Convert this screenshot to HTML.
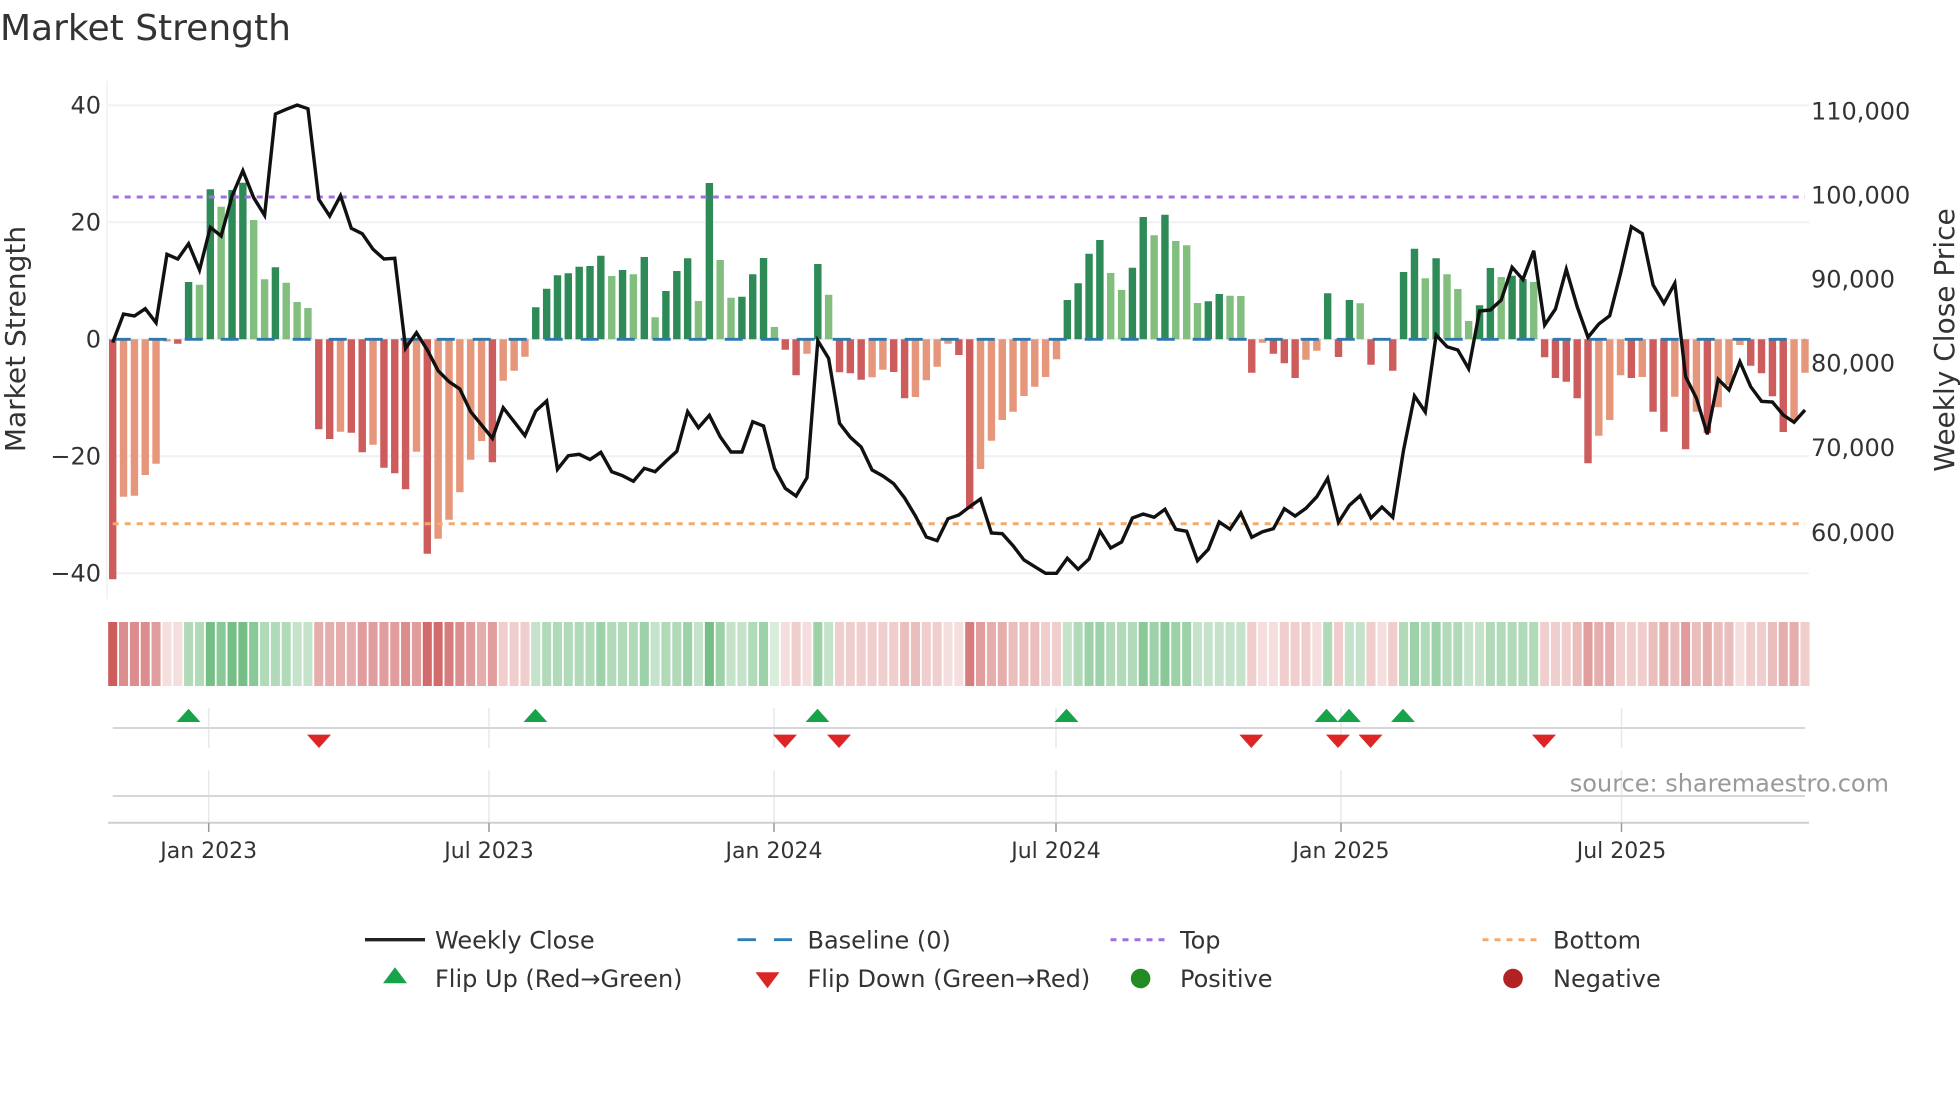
<!DOCTYPE html>
<html><head><meta charset="utf-8"><title>Market Strength</title>
<style>
html,body{margin:0;padding:0;background:#fff;width:1960px;height:1102px;overflow:hidden}
svg{display:block}
text{font-family:"DejaVu Sans","Liberation Sans",sans-serif;fill:#333}
</style></head><body>
<svg width="1960" height="1102" viewBox="0 0 1960 1102" xmlns="http://www.w3.org/2000/svg">
<text x="0" y="40" font-size="36">Market Strength</text>
<path d="M107 81V599" stroke="#f0f0f4" stroke-width="1.5" fill="none"/>
<path d="M108 105.3H1809M108 222.3H1809M108 339.3H1809M108 456.3H1809M108 573.3H1809" stroke="#f0f0f5" stroke-width="2" fill="none"/>
<g transform="matrix(1.00129 0 0 1 -0.846 0)" fill="none">
<g stroke-width="7.4">
<path stroke="#2e8b57" d="M189.2 339.3V282M210.9 339.3V189.3M232.6 339.3V190M243.4 339.3V182.7M275.9 339.3V267.3M535.9 339.3V307.3M546.8 339.3V288.7M557.6 339.3V275.3M568.4 339.3V273.3M579.3 339.3V266.7M590.1 339.3V266M600.9 339.3V255.7M622.6 339.3V270M644.3 339.3V257M665.9 339.3V291M676.8 339.3V271M687.6 339.3V258.3M709.3 339.3V183M741.8 339.3V296.7M752.6 339.3V274.3M763.4 339.3V258M817.6 339.3V264M1066.8 339.3V300M1077.6 339.3V283.3M1088.5 339.3V253.7M1099.3 339.3V240M1131.8 339.3V267.7M1142.6 339.3V217M1164.3 339.3V214.7M1207.6 339.3V301.3M1218.5 339.3V294M1326.8 339.3V293.3M1348.5 339.3V300M1402.6 339.3V272M1413.5 339.3V248.7M1435.1 339.3V258.3M1478.5 339.3V305.3M1489.3 339.3V268M1511 339.3V275.7M1521.8 339.3V279"/>
<path stroke="#82bf7f" d="M200.1 339.3V284.7M221.7 339.3V206.7M254.2 339.3V220M265.1 339.3V279.3M286.7 339.3V282.7M297.6 339.3V302M308.4 339.3V308M611.8 339.3V276M633.4 339.3V274.3M655.1 339.3V317.3M698.4 339.3V301M720.1 339.3V260M730.9 339.3V297.7M774.3 339.3V327M828.4 339.3V294.7M1110.1 339.3V273M1121 339.3V290M1153.5 339.3V235.3M1175.1 339.3V241M1186 339.3V245.3M1196.8 339.3V303M1229.3 339.3V295.7M1240.1 339.3V296M1359.3 339.3V303.3M1424.3 339.3V278.3M1446 339.3V274.3M1456.8 339.3V289M1467.6 339.3V321M1500.1 339.3V277M1532.6 339.3V282"/>
<path stroke="#cd5c5c" d="M113.4 339.3V579.3M178.4 339.3V343.7M319.2 339.3V429.3M330.1 339.3V439M351.7 339.3V432.7M362.6 339.3V452.3M384.3 339.3V467.7M395.1 339.3V473.3M405.9 339.3V489.3M427.6 339.3V553.7M492.6 339.3V462.3M785.1 339.3V349.7M795.9 339.3V375.3M839.3 339.3V372.3M850.1 339.3V373.3M860.9 339.3V379.7M893.4 339.3V372M904.3 339.3V398.3M958.5 339.3V355M969.3 339.3V509M1251 339.3V372.7M1272.6 339.3V353.7M1283.5 339.3V363.3M1294.3 339.3V378M1337.6 339.3V357M1370.1 339.3V364.7M1391.8 339.3V370.7M1543.5 339.3V357.3M1554.3 339.3V378M1565.1 339.3V381.7M1576 339.3V398.3M1586.8 339.3V463.3M1630.1 339.3V378M1651.8 339.3V411.7M1662.6 339.3V431.7M1684.3 339.3V449.3M1706 339.3V433M1749.3 339.3V365.7M1760.1 339.3V373.3M1771 339.3V396.3M1781.8 339.3V432"/>
<path stroke="#e6967a" d="M124.2 339.3V496.7M135.1 339.3V495.7M145.9 339.3V475M156.7 339.3V463.7M167.6 339.3V341.5M340.9 339.3V431.7M373.4 339.3V444.7M416.8 339.3V451.7M438.4 339.3V538.7M449.3 339.3V519.7M460.1 339.3V492.3M470.9 339.3V459.7M481.8 339.3V441M503.4 339.3V380.7M514.3 339.3V370.7M525.1 339.3V356.7M806.8 339.3V353.7M871.8 339.3V377.3M882.6 339.3V369.7M915.1 339.3V397M926 339.3V380.3M936.8 339.3V366.7M947.6 339.3V343.7M980.1 339.3V469M991 339.3V440.7M1001.8 339.3V420M1012.6 339.3V411.7M1023.5 339.3V396M1034.3 339.3V386.7M1045.1 339.3V377M1056 339.3V359.3M1261.8 339.3V342.7M1305.1 339.3V359.7M1316 339.3V350.7M1597.6 339.3V435.7M1608.5 339.3V420M1619.3 339.3V375.3M1641 339.3V377M1673.5 339.3V396.7M1695.1 339.3V411.7M1716.8 339.3V407.3M1727.6 339.3V385M1738.5 339.3V345M1792.6 339.3V420M1803.5 339.3V372.7"/>
</g>
<g stroke-width="9.05">
<g stroke="#cd5c5c">
<path d="M113.4 622V686"/>
<path stroke-opacity=".9" d="M427.6 622V686M438.4 622V686"/>
<path stroke-opacity=".8" d="M449.3 622V686M969.3 622V686"/>
<path stroke-opacity=".7" d="M124.2 622V686M135.1 622V686M145.9 622V686M405.9 622V686M460.1 622V686"/>
<path stroke-opacity=".6" d="M156.7 622V686M362.6 622V686M373.4 622V686M384.3 622V686M395.1 622V686M416.8 622V686M470.9 622V686M492.6 622V686M980.1 622V686M1586.8 622V686M1684.3 622V686"/>
<path stroke-opacity=".5" d="M319.2 622V686M330.1 622V686M340.9 622V686M351.7 622V686M481.8 622V686M991 622V686M1001.8 622V686M1597.6 622V686M1608.5 622V686M1662.6 622V686M1706 622V686M1781.8 622V686M1792.6 622V686"/>
<path stroke-opacity=".4" d="M904.3 622V686M915.1 622V686M1012.6 622V686M1023.5 622V686M1034.3 622V686M1576 622V686M1651.8 622V686M1673.5 622V686M1695.1 622V686M1716.8 622V686M1727.6 622V686M1771 622V686"/>
<path stroke-opacity=".3" d="M503.4 622V686M514.3 622V686M525.1 622V686M795.9 622V686M839.3 622V686M850.1 622V686M860.9 622V686M871.8 622V686M882.6 622V686M893.4 622V686M926 622V686M936.8 622V686M1045.1 622V686M1056 622V686M1251 622V686M1283.5 622V686M1294.3 622V686M1305.1 622V686M1337.6 622V686M1370.1 622V686M1391.8 622V686M1543.5 622V686M1554.3 622V686M1565.1 622V686M1619.3 622V686M1630.1 622V686M1641 622V686M1749.3 622V686M1760.1 622V686M1803.5 622V686"/>
<path stroke-opacity=".2" d="M167.6 622V686M178.4 622V686M785.1 622V686M806.8 622V686M947.6 622V686M958.5 622V686M1261.8 622V686M1272.6 622V686M1316 622V686M1381 622V686M1738.5 622V686"/>
</g>
<g stroke="#3ba351">
<path stroke-opacity=".7" d="M210.9 622V686M232.6 622V686M243.4 622V686M709.3 622V686"/>
<path stroke-opacity=".6" d="M221.7 622V686M254.2 622V686M1142.6 622V686M1164.3 622V686"/>
<path stroke-opacity=".5" d="M600.9 622V686M644.3 622V686M687.6 622V686M720.1 622V686M763.4 622V686M817.6 622V686M1088.5 622V686M1099.3 622V686M1153.5 622V686M1175.1 622V686M1186 622V686M1413.5 622V686M1435.1 622V686"/>
<path stroke-opacity=".4" d="M189.2 622V686M200.1 622V686M265.1 622V686M275.9 622V686M286.7 622V686M546.8 622V686M557.6 622V686M568.4 622V686M579.3 622V686M590.1 622V686M611.8 622V686M622.6 622V686M633.4 622V686M665.9 622V686M676.8 622V686M752.6 622V686M1077.6 622V686M1110.1 622V686M1121 622V686M1131.8 622V686M1326.8 622V686M1402.6 622V686M1424.3 622V686M1446 622V686M1456.8 622V686M1489.3 622V686M1500.1 622V686M1511 622V686M1521.8 622V686M1532.6 622V686"/>
<path stroke-opacity=".3" d="M297.6 622V686M308.4 622V686M535.9 622V686M655.1 622V686M698.4 622V686M730.9 622V686M741.8 622V686M828.4 622V686M1066.8 622V686M1196.8 622V686M1207.6 622V686M1218.5 622V686M1229.3 622V686M1240.1 622V686M1348.5 622V686M1359.3 622V686M1467.6 622V686M1478.5 622V686"/>
<path stroke-opacity=".2" d="M774.3 622V686"/>
</g>
</g>
</g>
<path d="M112.7 339.3H1805" stroke="#2f78ac" stroke-width="2.8" stroke-dasharray="18 18" fill="none"/>
<path d="M112.7 197H1805" stroke="#a06fe0" stroke-width="3" stroke-dasharray="6 6" fill="none"/>
<path d="M112.7 523.7H1805" stroke="#f4aa6c" stroke-width="3" stroke-dasharray="6 6" fill="none"/>
<g transform="matrix(1.00129 0 0 1 -0.846 0)">
<polyline fill="none" stroke="#111" stroke-width="3.4" stroke-linejoin="miter" points="113.4,342.5 124.2,314 135.1,316 145.9,308.7 156.7,322.7 167.6,254.3 178.4,259 189.2,243.7 200.1,270 210.9,227.3 221.7,236 232.6,196 243.4,170.7 254.2,197.7 265.1,215.3 275.9,114 286.7,109.3 297.6,105 308.4,108.7 319.2,199.3 330.1,216 340.9,195.7 351.7,228.3 362.6,233.7 373.4,249.3 384.3,259 395.1,258.3 405.9,348.3 416.8,332.7 427.6,350 438.4,370.7 449.3,381.7 460.1,389 470.9,411.7 481.8,425 492.6,438.3 503.4,407.7 514.3,421.7 525.1,435.7 535.9,411 546.8,401 557.6,469.3 568.4,455.7 579.3,454.3 590.1,459.5 600.9,452.3 611.8,471.7 622.6,475.7 633.4,481.3 644.3,468.3 655.1,471.7 665.9,461.3 676.8,451.3 687.6,411.7 698.4,427.7 709.3,415.3 720.1,436.7 730.9,452 741.8,452 752.6,421.7 763.4,426 774.3,468.3 785.1,488.3 795.9,496 806.8,477.7 817.6,340.7 828.4,358.3 839.3,423.3 850.1,437.3 860.9,447 871.8,470 882.6,476 893.4,483.7 904.3,498 915.1,516 926,537 936.8,540.7 947.6,518.7 958.5,515 969.3,506.7 980.1,499 991,533 1001.8,533.7 1012.6,545.7 1023.5,560 1034.3,566.7 1045.1,573.3 1056,573.3 1066.8,558.3 1077.6,569.3 1088.5,559 1099.3,531 1110.1,548 1121,542 1131.8,518 1142.6,514 1153.5,517.3 1164.3,509.3 1175.1,529.3 1186,531.3 1196.8,560.7 1207.6,549.3 1218.5,522 1229.3,529.3 1240.1,513 1251,537.3 1261.8,531.7 1272.6,528.7 1283.5,508.7 1294.3,516 1305.1,508.3 1316,496.7 1326.8,478.3 1337.6,522.3 1348.5,505.3 1359.3,495.7 1370.1,518 1381,507 1391.8,517.3 1402.6,450 1413.5,396 1424.3,412 1435.1,335 1446,346.7 1456.8,350 1467.6,368.7 1478.5,311 1489.3,310 1500.1,300 1511,267.3 1521.8,279.5 1532.6,250.7 1543.5,325 1554.3,309 1565.1,269.3 1576,306.7 1586.8,337.3 1597.6,324 1608.5,315.7 1619.3,273.3 1630.1,226.7 1641,233.7 1651.8,285 1662.6,303.3 1673.5,283.3 1684.3,376.7 1695.1,398.3 1706,434.3 1716.8,379.3 1727.6,390 1738.5,361.7 1749.3,386.7 1760.1,401.3 1771,402 1781.8,415 1792.6,422.3 1803.5,410"/>
</g>
<g stroke="#e8e8ee" stroke-width="1.5" fill="none">
<path d="M208.7 708V748M208.7 770V823M489 708V748M489 770V823M774 708V748M774 770V823M1056 708V748M1056 770V823M1341 708V748M1341 770V823M1621.5 708V748M1621.5 770V823"/>
</g>
<path d="M112.7 728H1805M112.7 796H1805" stroke="#d6d6da" stroke-width="2" fill="none"/>
<path d="M108 822.7H1809" stroke="#cfcfd2" stroke-width="2" fill="none"/>
<path d="M208.7 823V832M489 823V832M774 823V832M1056 823V832M1341 823V832M1621.5 823V832" stroke="#999" stroke-width="1.5" fill="none"/>
<g fill="#16a34a">
<path d="M188.5 708.7L200.4 722H176.6Z"/><path d="M535.4 708.7L547.3 722H523.5Z"/><path d="M817.5 708.7L829.4 722H805.6Z"/><path d="M1066.5 708.7L1078.4 722H1054.6Z"/><path d="M1326.5 708.7L1338.4 722H1314.6Z"/><path d="M1349 708.7L1360.9 722H1337.1Z"/><path d="M1403 708.7L1414.9 722H1391.1Z"/>
</g>
<g fill="#dc2626">
<path d="M319 748L307 734.6H331Z"/><path d="M785 748L773 734.6H797Z"/><path d="M839 748L827 734.6H851Z"/><path d="M1251.3 748L1239.3 734.6H1263.3Z"/><path d="M1338 748L1326 734.6H1350Z"/><path d="M1370.5 748L1358.5 734.6H1382.5Z"/><path d="M1544 748L1532 734.6H1556Z"/>
</g>
<g font-size="24" text-anchor="end">
<text x="101" y="113.6">40</text>
<text x="101" y="230.6">20</text>
<text x="101" y="347.6">0</text>
<text x="101" y="464.6">−20</text>
<text x="101" y="581.6">−40</text>
</g>
<g font-size="24">
<text x="1811" y="119.6">110,000</text>
<text x="1811" y="203.6">100,000</text>
<text x="1811" y="287.7">90,000</text>
<text x="1811" y="371.7">80,000</text>
<text x="1811" y="456">70,000</text>
<text x="1811" y="541">60,000</text>
</g>
<text transform="translate(25,339) rotate(-90)" text-anchor="middle" font-size="28">Market Strength</text>
<text transform="translate(1954,340) rotate(-90)" text-anchor="middle" font-size="28">Weekly Close Price</text>
<g font-size="22" text-anchor="middle">
<text x="208.7" y="858">Jan 2023</text>
<text x="489" y="858">Jul 2023</text>
<text x="774" y="858">Jan 2024</text>
<text x="1056" y="858">Jul 2024</text>
<text x="1341" y="858">Jan 2025</text>
<text x="1621.5" y="858">Jul 2025</text>
</g>
<text x="1889" y="791.5" text-anchor="end" font-size="24" style="fill:#999">source: sharemaestro.com</text>
<path d="M365 939.7H425" stroke="#222" stroke-width="3.4" fill="none"/>
<path d="M737.5 939.7H756M774 939.7H792" stroke="#2f7fb5" stroke-width="2.8" fill="none"/>
<path d="M1110.5 939.7H1165" stroke="#a06fe0" stroke-width="3" stroke-dasharray="6 6" fill="none"/>
<path d="M1482.5 939.7H1538" stroke="#f4aa6c" stroke-width="3" stroke-dasharray="6 6" fill="none"/>
<path d="M395 967.3L407 983.3H383Z" fill="#16a34a"/>
<path d="M767.5 988.3L755.5 972.3H779.5Z" fill="#dc2626"/>
<circle cx="1140.6" cy="978.5" r="9.8" fill="#228b22"/>
<circle cx="1513" cy="978.5" r="9.8" fill="#b22222"/>
<g font-size="24">
<text x="435" y="948.5">Weekly Close</text>
<text x="807.5" y="948.5">Baseline (0)</text>
<text x="1180" y="948.5">Top</text>
<text x="1553" y="948.5">Bottom</text>
<text x="435" y="987">Flip Up (Red→Green)</text>
<text x="807.5" y="987">Flip Down (Green→Red)</text>
<text x="1180" y="987">Positive</text>
<text x="1553" y="987">Negative</text>
</g>
</svg>
</body></html>
